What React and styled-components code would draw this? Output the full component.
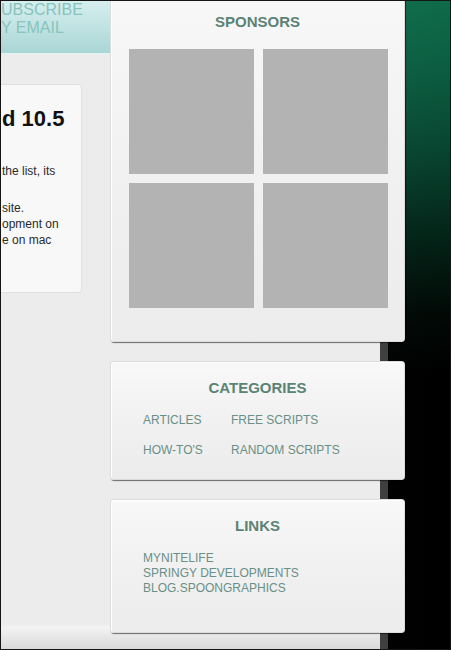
import styled, { createGlobalStyle } from 'styled-components'

const GlobalStyle = createGlobalStyle`
  html, body {
    margin: 0;
    padding: 0;
    background: #000;
  }
  * {
    box-sizing: border-box;
  }
`

const Frame = styled.div`
  width: 451px;
  height: 650px;
  border: 1px solid #151515;
  overflow: hidden;
  display: flex;
  font-family: "Liberation Sans", Arial, sans-serif;
  background:
    linear-gradient(to right, rgba(255, 255, 255, 0.05), rgba(0, 0, 0, 0.2)),
    linear-gradient(to bottom, #12855c 0, #0e7350 70px, #0a553b 150px, #042a1c 240px, #010c07 310px, #000 370px);
`

const Page = styled.div`
  width: 379px;
  height: 100%;
  flex-shrink: 0;
  display: flex;
  align-items: flex-start;
  background: linear-gradient(to bottom, #ececec 0, #ececec 623px, #f3f3f3 626px, #d8d8d8 100%);
  box-shadow: 8px 0 0 #3f3f3f;
`

const LeftCol = styled.div`
  width: 109px;
  flex-shrink: 0;
  display: flex;
  flex-direction: column;
`

const Subscribe = styled.div`
  height: 53px;
  background: linear-gradient(to bottom, #d6eeee 0, #c3e4e4 45%, #a9d5d5 100%);
  border-bottom: 1px solid #e4f2f2;
  color: #88c3bd;
  font-size: 16px;
  line-height: 18px;
  white-space: nowrap;
  overflow: hidden;
`

const ContentBox = styled.div`
  margin-top: 30px;
  margin-left: -10px;
  width: 91px;
  height: 209px;
  background: #f8f8f8;
  border: 1px solid #e0e0e0;
  border-radius: 4px;
  padding: 21px 0 0 10px;
  overflow: hidden;
  white-space: nowrap;
`

const PostTitle = styled.h2`
  margin: 0;
  font-size: 22px;
  line-height: 26px;
  font-weight: bold;
  color: #111;
`

const PostText = styled.p`
  margin: ${(p) => p.$top}px 0 0 0;
  font-size: 12px;
  line-height: 16px;
  color: #2a2a2a;
`

const Sidebar = styled.div`
  width: 295px;
  flex-shrink: 0;
  margin-top: -11px;
  display: flex;
  flex-direction: column;
  gap: 19px;
`

const Box = styled.div`
  height: ${(p) => p.$h}px;
  padding-top: ${(p) => p.$pt}px;
  background: linear-gradient(to bottom, #f8f8f8 0, #f1f1f1 50%, #ececec 100%);
  border: 1px solid #dcdcdc;
  border-radius: 3px;
  box-shadow: 1px 1px 1px rgba(0, 0, 0, 0.55), inset 1px 1px 0 #fff;
`

const BoxTitle = styled.h3`
  margin: 0;
  text-align: center;
  font-size: 15px;
  line-height: 18px;
  font-weight: bold;
  color: #5b8374;
`

const SponsorGrid = styled.div`
  margin-top: 18px;
  padding-left: 18px;
  display: grid;
  grid-template-columns: 125px 125px;
  grid-auto-rows: 125px;
  gap: 9px;
`

const Ad = styled.div`
  background: #b3b3b3;
`

const CatGrid = styled.div`
  margin-top: 8px;
  padding-left: 32px;
  display: grid;
  grid-template-columns: 88px auto;
  grid-auto-rows: 30px;
  align-items: center;
`

const NavLink = styled.a`
  display: block;
  font-size: 12px;
  line-height: 15px;
  color: #6a8f86;
  text-decoration: none;
  white-space: nowrap;
`

const LinkList = styled.div`
  margin-top: 16px;
  padding-left: 32px;
`

const categories = ['ARTICLES', 'FREE SCRIPTS', "HOW-TO'S", 'RANDOM SCRIPTS']
const links = ['MYNITELIFE', 'SPRINGY DEVELOPMENTS', 'BLOG.SPOONGRAPHICS']

export default function App() {
  return (
    <>
      <GlobalStyle />
      <Frame>
        <Page>
          <LeftCol>
            <Subscribe>
              <div>UBSCRIBE</div>
              <div>Y EMAIL</div>
            </Subscribe>
            <ContentBox>
              <PostTitle>d 10.5</PostTitle>
              <PostText $top={31}>the list, its</PostText>
              <PostText $top={21}>
                site.
                <br />
                opment on
                <br />
                e on mac
              </PostText>
            </ContentBox>
          </LeftCol>
          <Sidebar>
            <Box $h={352} $pt={22}>
              <BoxTitle>SPONSORS</BoxTitle>
              <SponsorGrid>
                <Ad />
                <Ad />
                <Ad />
                <Ad />
              </SponsorGrid>
            </Box>
            <Box $h={119} $pt={17}>
              <BoxTitle>CATEGORIES</BoxTitle>
              <CatGrid>
                {categories.map((c) => (
                  <NavLink key={c} href="#">{c}</NavLink>
                ))}
              </CatGrid>
            </Box>
            <Box $h={134} $pt={17}>
              <BoxTitle>LINKS</BoxTitle>
              <LinkList>
                {links.map((l) => (
                  <NavLink key={l} href="#">{l}</NavLink>
                ))}
              </LinkList>
            </Box>
          </Sidebar>
        </Page>
      </Frame>
    </>
  )
}
